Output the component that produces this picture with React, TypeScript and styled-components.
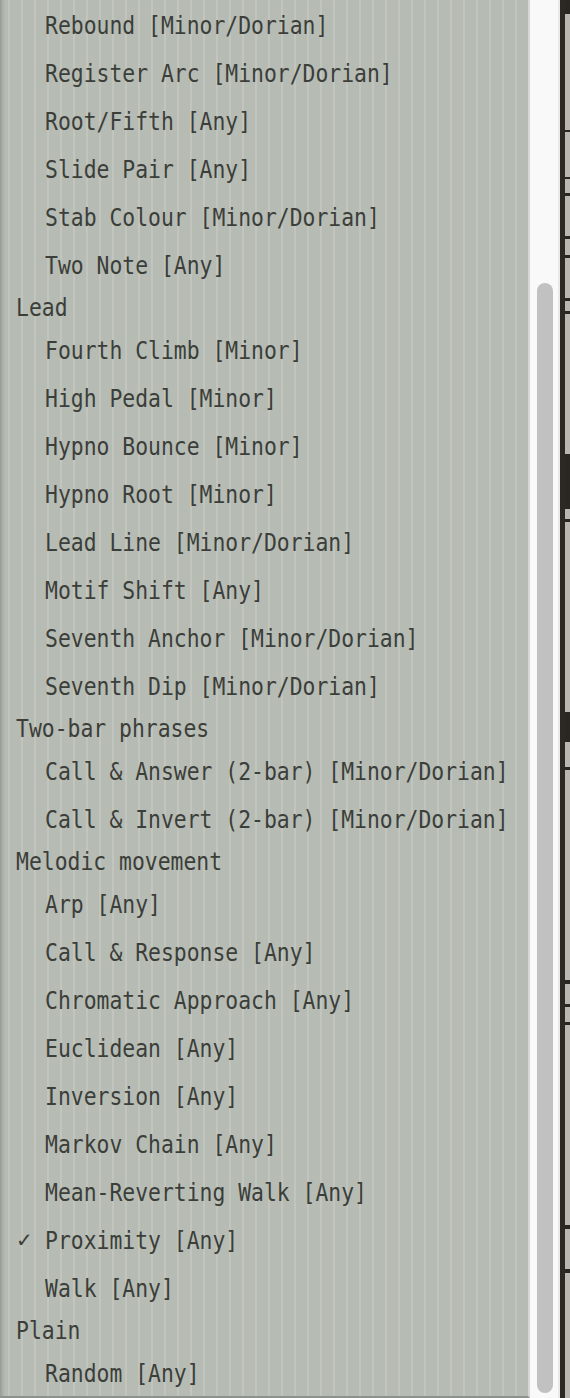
import * as React from 'react';
import styled, { createGlobalStyle } from 'styled-components';

const textColor = '#3b3e39';

const GlobalStyle = createGlobalStyle`
  html, body {
    margin: 0;
    padding: 0;
    background: #f9f9f9;
    overflow: hidden;
  }
`;

type Entry =
  | { kind: 'group'; label: string }
  | { kind: 'item'; label: string; checked?: boolean };

const entries: Entry[] = [
  { kind: 'item', label: 'Rebound [Minor/Dorian]' },
  { kind: 'item', label: 'Register Arc [Minor/Dorian]' },
  { kind: 'item', label: 'Root/Fifth [Any]' },
  { kind: 'item', label: 'Slide Pair [Any]' },
  { kind: 'item', label: 'Stab Colour [Minor/Dorian]' },
  { kind: 'item', label: 'Two Note [Any]' },
  { kind: 'group', label: 'Lead' },
  { kind: 'item', label: 'Fourth Climb [Minor]' },
  { kind: 'item', label: 'High Pedal [Minor]' },
  { kind: 'item', label: 'Hypno Bounce [Minor]' },
  { kind: 'item', label: 'Hypno Root [Minor]' },
  { kind: 'item', label: 'Lead Line [Minor/Dorian]' },
  { kind: 'item', label: 'Motif Shift [Any]' },
  { kind: 'item', label: 'Seventh Anchor [Minor/Dorian]' },
  { kind: 'item', label: 'Seventh Dip [Minor/Dorian]' },
  { kind: 'group', label: 'Two-bar phrases' },
  { kind: 'item', label: 'Call & Answer (2-bar) [Minor/Dorian]' },
  { kind: 'item', label: 'Call & Invert (2-bar) [Minor/Dorian]' },
  { kind: 'group', label: 'Melodic movement' },
  { kind: 'item', label: 'Arp [Any]' },
  { kind: 'item', label: 'Call & Response [Any]' },
  { kind: 'item', label: 'Chromatic Approach [Any]' },
  { kind: 'item', label: 'Euclidean [Any]' },
  { kind: 'item', label: 'Inversion [Any]' },
  { kind: 'item', label: 'Markov Chain [Any]' },
  { kind: 'item', label: 'Mean-Reverting Walk [Any]' },
  { kind: 'item', label: 'Proximity [Any]', checked: true },
  { kind: 'item', label: 'Walk [Any]' },
  { kind: 'group', label: 'Plain' },
  { kind: 'item', label: 'Random [Any]' },
];

const Page = styled.div`
  display: flex;
  width: 570px;
  height: 1398px;
  overflow: hidden;
`;

// striped popup body: thin pale rules over a grey-green fill, shaded left edge
const Menu = styled.div`
  flex: 0 0 530px;
  display: flex;
  flex-direction: column;
  padding-top: 1px;
  box-sizing: border-box;
  border-right: 2px solid #d4d7d2;
  border-bottom: 2px solid #8e928c;
  background-color: #b6bbb4;
  background-image:
    linear-gradient(to right, #959a93 0, #a6aba4 2px, rgba(182, 187, 180, 0) 5px),
    linear-gradient(to right, transparent 8px, #c1c5be 8px, #c1c5be 10px, transparent 10px);
  background-size: 100% 100%, 13px 100%;
  background-repeat: no-repeat, repeat-x;
  font-family: 'DejaVu Sans Mono', 'Liberation Mono', monospace;
  font-size: 21.4px;
  color: ${textColor};
`;

const Row = styled.div<{ $group?: boolean }>`
  position: relative;
  display: flex;
  align-items: center;
  flex: 0 0 ${p => (p.$group ? 37 : 48)}px;
  padding-left: ${p => (p.$group ? 16 : 45)}px;
  white-space: pre;
`;

const Label = styled.span`
  display: inline-block;
  transform: scaleY(1.15);
`;

const Check = styled.span`
  position: absolute;
  left: 16px;
  top: 50%;
  transform: translateY(-50%);
  font-family: 'DejaVu Sans', sans-serif;
  font-size: 20px;
  font-weight: bold;
`;

const Track = styled.div`
  flex: 0 0 27px;
  padding: 283px 5px 5px 7px;
  box-sizing: border-box;
  background: #f9f9f9;
  border-right: 2px solid #e9e9e7;
  display: flex;
  flex-direction: column;
`;

const Thumb = styled.div`
  flex: 1;
  width: 16px;
  border-radius: 8px;
  background: #c1c1c1;
`;

const Backdrop = styled.div`
  flex: 1;
  display: flex;
  background: #2c2925;
`;

const BackdropShade = styled.div`
  margin-left: 5px;
  flex: 1;
  display: flex;
  flex-direction: column;
  background: #b9b7b2;
`;

const BackdropBand = styled.div<{ $h: number; $dark?: boolean }>`
  flex: 0 0 ${p => p.$h}px;
  background: ${p => (p.$dark ? '#2a2723' : 'transparent')};
`;

// pieces of the app window showing behind the popup edge
const backdropBands: Array<[number, boolean]> = [
  [14, true], [6, false], [110, false], [2, true], [45, false], [2, true],
  [14, false], [3, true], [40, false], [3, true], [16, false], [3, true],
  [40, false], [3, true], [10, false], [3, true], [140, false], [55, true],
  [10, false], [3, true], [190, false], [30, true], [25, false], [3, true],
  [80, false], [130, false], [4, true], [20, false], [3, true], [15, false],
  [3, true], [200, false], [4, true], [40, false], [4, true], [300, false],
];

const App = () => (
  <Page>
    <GlobalStyle />
    <Menu>
      {entries.map((e, i) =>
        e.kind === 'group' ? (
          <Row key={i} $group>
            <Label>{e.label}</Label>
          </Row>
        ) : (
          <Row key={i}>
            {e.checked && <Check>✓</Check>}
            <Label>{e.label}</Label>
          </Row>
        )
      )}
    </Menu>
    <Track>
      <Thumb />
    </Track>
    <Backdrop>
      <BackdropShade>
        {backdropBands.map(([h, dark], i) => (
          <BackdropBand key={i} $h={h} $dark={dark} />
        ))}
      </BackdropShade>
    </Backdrop>
  </Page>
);

export default App;
